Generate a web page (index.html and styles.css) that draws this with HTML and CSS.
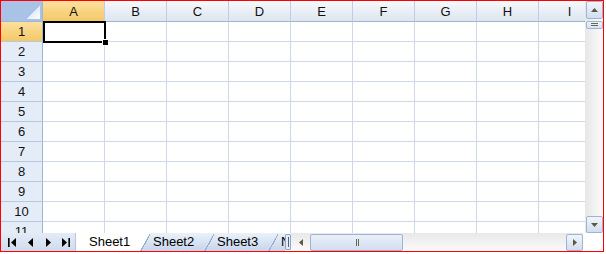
FILE: index.html
```html
<!doctype html>
<html>
  <head>
    <meta charset="utf-8" />
    <title>Workbook</title>
    <link rel="stylesheet" href="styles.css">
  </head>
  <body>
    <div class="workbook">
      <div class="main">
        <div class="sheet">
          <div class="row hdr-row">
            <div class="cell corner"></div>
            <div class="cell sel">A</div>
            <div class="cell">B</div>
            <div class="cell">C</div>
            <div class="cell">D</div>
            <div class="cell">E</div>
            <div class="cell">F</div>
            <div class="cell">G</div>
            <div class="cell">H</div>
            <div class="cell">I</div>
          </div>
          <div class="row">
            <div class="cell rh sel">1</div>
            <div class="cell active"></div><div class="cell"></div><div class="cell"></div><div class="cell"></div><div class="cell"></div><div class="cell"></div><div class="cell"></div><div class="cell"></div><div class="cell"></div>
          </div>
          <div class="row">
            <div class="cell rh">2</div>
            <div class="cell"></div><div class="cell"></div><div class="cell"></div><div class="cell"></div><div class="cell"></div><div class="cell"></div><div class="cell"></div><div class="cell"></div><div class="cell"></div>
          </div>
          <div class="row">
            <div class="cell rh">3</div>
            <div class="cell"></div><div class="cell"></div><div class="cell"></div><div class="cell"></div><div class="cell"></div><div class="cell"></div><div class="cell"></div><div class="cell"></div><div class="cell"></div>
          </div>
          <div class="row">
            <div class="cell rh">4</div>
            <div class="cell"></div><div class="cell"></div><div class="cell"></div><div class="cell"></div><div class="cell"></div><div class="cell"></div><div class="cell"></div><div class="cell"></div><div class="cell"></div>
          </div>
          <div class="row">
            <div class="cell rh">5</div>
            <div class="cell"></div><div class="cell"></div><div class="cell"></div><div class="cell"></div><div class="cell"></div><div class="cell"></div><div class="cell"></div><div class="cell"></div><div class="cell"></div>
          </div>
          <div class="row">
            <div class="cell rh">6</div>
            <div class="cell"></div><div class="cell"></div><div class="cell"></div><div class="cell"></div><div class="cell"></div><div class="cell"></div><div class="cell"></div><div class="cell"></div><div class="cell"></div>
          </div>
          <div class="row">
            <div class="cell rh">7</div>
            <div class="cell"></div><div class="cell"></div><div class="cell"></div><div class="cell"></div><div class="cell"></div><div class="cell"></div><div class="cell"></div><div class="cell"></div><div class="cell"></div>
          </div>
          <div class="row">
            <div class="cell rh">8</div>
            <div class="cell"></div><div class="cell"></div><div class="cell"></div><div class="cell"></div><div class="cell"></div><div class="cell"></div><div class="cell"></div><div class="cell"></div><div class="cell"></div>
          </div>
          <div class="row">
            <div class="cell rh">9</div>
            <div class="cell"></div><div class="cell"></div><div class="cell"></div><div class="cell"></div><div class="cell"></div><div class="cell"></div><div class="cell"></div><div class="cell"></div><div class="cell"></div>
          </div>
          <div class="row">
            <div class="cell rh">10</div>
            <div class="cell"></div><div class="cell"></div><div class="cell"></div><div class="cell"></div><div class="cell"></div><div class="cell"></div><div class="cell"></div><div class="cell"></div><div class="cell"></div>
          </div>
          <div class="row">
            <div class="cell rh">11</div>
            <div class="cell"></div><div class="cell"></div><div class="cell"></div><div class="cell"></div><div class="cell"></div><div class="cell"></div><div class="cell"></div><div class="cell"></div><div class="cell"></div>
          </div>
        </div>

        <div class="vscroll">
          <div class="sbtn up">
            <svg width="7" height="4" viewBox="0 0 7 4"><path d="M0 4L3.5 0L7 4Z" /></svg>
          </div>
          <div class="vthumb"></div>
          <div class="track"></div>
          <div class="sbtn down">
            <svg width="7" height="4" viewBox="0 0 7 4"><path d="M0 0L3.5 4L7 0Z" /></svg>
          </div>
        </div>
      </div>

      <div class="bar">
        <div class="nav">
          <span class="navbtn">
            <svg width="8" height="9" viewBox="0 0 8 9"><rect x="0" y="0" width="1.6" height="9" /><path d="M8 0L3 4.5L8 9Z" /></svg>
          </span>
          <span class="navbtn">
            <svg width="5" height="9" viewBox="0 0 5 9"><path d="M5 0L0 4.5L5 9Z" /></svg>
          </span>
          <span class="navbtn">
            <svg width="5" height="9" viewBox="0 0 5 9"><path d="M0 0L5 4.5L0 9Z" /></svg>
          </span>
          <span class="navbtn">
            <svg width="8" height="9" viewBox="0 0 8 9"><path d="M0 0L5 4.5L0 9Z" /><rect x="6.4" y="0" width="1.6" height="9" /></svg>
          </span>
        </div>

        <div class="tabs">
          <div class="tab current">Sheet1</div>
          <div class="tab">Sheet2</div>
          <div class="tab">Sheet3</div>
          <div class="tab">N</div>
        </div>
        <div class="split"></div>

        <div class="hscroll">
          <div class="hbtn">
            <svg width="4" height="7" viewBox="0 0 4 7"><path d="M4 0L0 3.5L4 7Z" /></svg>
          </div>
          <div class="hthumb"></div>
          <div class="track"></div>
          <div class="sbtn right">
            <svg width="4" height="7" viewBox="0 0 4 7"><path d="M0 0L4 3.5L0 7Z" /></svg>
          </div>
        </div>
        <div class="corner-box"></div>
      </div>
    </div>
  </body>
</html>
```

FILE: styles.css
```css
body {
  margin: 0;
  background: #fff;
  font-family: "Liberation Sans", Arial, sans-serif;
  font-size: 13px;
  color: #000;
}

.workbook {
  width: 604px;
  height: 252px;
  border: 1px solid #f00;
  box-sizing: border-box;
  display: flex;
  flex-direction: column;
}

.main {
  display: flex;
  height: 232px;
}

/* grid */
.sheet {
  flex: 1;
  min-width: 0;
  overflow: hidden;
}
.row {
  display: grid;
  grid-template-columns: 42px repeat(9, 62px);
  height: 20px;
}
.row.hdr-row {
  height: 21px;
}
.cell {
  box-sizing: border-box;
  border-right: 1px solid #d0d7e5;
  border-bottom: 1px solid #d0d7e5;
  display: flex;
  align-items: center;
  justify-content: center;
  font-size: 13px;
  color: #111;
}
.hdr-row .cell {
  background: linear-gradient(#f7f9fc, #dde5f0);
  border-right-color: #bfcde0;
  border-bottom-color: #9eb6ce;
}
.rh {
  background: #e4ecf7;
  border-right-color: #9eb6ce;
  border-bottom-color: #b6c8de;
}
.hdr-row .cell.sel,
.rh.sel {
  background: linear-gradient(#fbe09e, #f4c866);
}
.hdr-row .cell.corner {
  background:
    linear-gradient(to bottom right, transparent 50%, #e4ecf8 50%, #fdfeff) right 2px bottom 2px / 14px 13px no-repeat,
    #a9c3e8;
  border-right-color: #9eb6ce;
}
.active {
  position: relative;
}
.active::before {
  content: '';
  position: absolute;
  top: -1px;
  left: 0;
  width: 63px;
  height: 22px;
  border: 2px solid #000;
  box-sizing: border-box;
}
.active::after {
  content: '';
  position: absolute;
  left: 59px;
  top: 17px;
  width: 5px;
  height: 5px;
  background: #000;
  border: 1px solid #fff;
}

/* scrollbars */
.vscroll {
  width: 18px;
  padding-left: 1px;
  box-sizing: border-box;
  display: flex;
  flex-direction: column;
  background: linear-gradient(to right, #e7e7e7, #fbfbfb);
}
.sbtn {
  box-sizing: border-box;
  border: 1px solid #9fb4d1;
  border-radius: 2px;
  background: linear-gradient(#f1f5fb, #d2ddef);
  display: flex;
  align-items: center;
  justify-content: center;
  fill: #575c40;
}
.sbtn.up {
  height: 18px;
}
.sbtn.down {
  height: 17px;
}
.vthumb {
  height: 8px;
  margin-top: 2px;
  box-sizing: border-box;
  border: 1px solid #9fb4d1;
  border-radius: 2px;
  background:
    linear-gradient(#656a4c, #656a4c) center 1px / 7px 1px no-repeat,
    linear-gradient(#656a4c, #656a4c) center 3px / 7px 1px no-repeat,
    linear-gradient(#eef3fa, #d6e1f1);
}
.track {
  flex: 1;
}

/* bottom bar */
.bar {
  display: flex;
  height: 18px;
}
.nav {
  width: 75px;
  box-sizing: border-box;
  padding-left: 2px;
  border-right: 1px solid #b5c6dd;
  background: linear-gradient(#e3ebf6, #cfdcee);
  display: flex;
  align-items: center;
  fill: #000;
}
.navbtn {
  width: 18px;
  display: flex;
  justify-content: center;
}

.tabs {
  width: 209px;
  display: flex;
  overflow: hidden;
  background: linear-gradient(#e3ebf6, #cfdcee);
}
.tab {
  flex: none;
  width: 74px;
  box-sizing: border-box;
  padding-left: 13px;
  line-height: 18px;
  white-space: nowrap;
  background: linear-gradient(#ebf1f9, #c6d6ec);
}
.tab + .tab {
  margin-left: -10px;
  clip-path: polygon(0 100%, 10px 0, 100% 0, 100% 100%);
  background:
    linear-gradient(to bottom right, transparent 50%, #93abcc 50%, #93abcc calc(50% + 1.2px), transparent calc(50% + 1.2px)) 0 0 / 10px 100% no-repeat,
    linear-gradient(#ebf1f9, #c6d6ec);
}
.tab.current {
  background: #fff;
}

.split {
  width: 6px;
  margin: 1px 0;
  box-sizing: border-box;
  border: 1px solid #8ea7c9;
  border-radius: 1px;
  background:
    linear-gradient(#4d6186, #4d6186) center / 1px 10px no-repeat,
    #e3ebf6;
}

.hscroll {
  width: 292px;
  display: flex;
  background: linear-gradient(#e8e8e8, #fbfbfb);
}
.hbtn {
  width: 19px;
  display: flex;
  align-items: center;
  justify-content: center;
  fill: #575c40;
}
.hthumb {
  width: 93px;
  margin-top: 1px;
  box-sizing: border-box;
  border: 1px solid #9fb4d1;
  border-radius: 2px;
  background:
    linear-gradient(#656a4c, #656a4c) 45px center / 1px 7px no-repeat,
    linear-gradient(#656a4c, #656a4c) 47px center / 1px 7px no-repeat,
    linear-gradient(#eaf0f9, #d2def0);
}
.sbtn.right {
  width: 17px;
  margin-top: 1px;
}
.corner-box {
  width: 20px;
  background: #fff;
}
```
